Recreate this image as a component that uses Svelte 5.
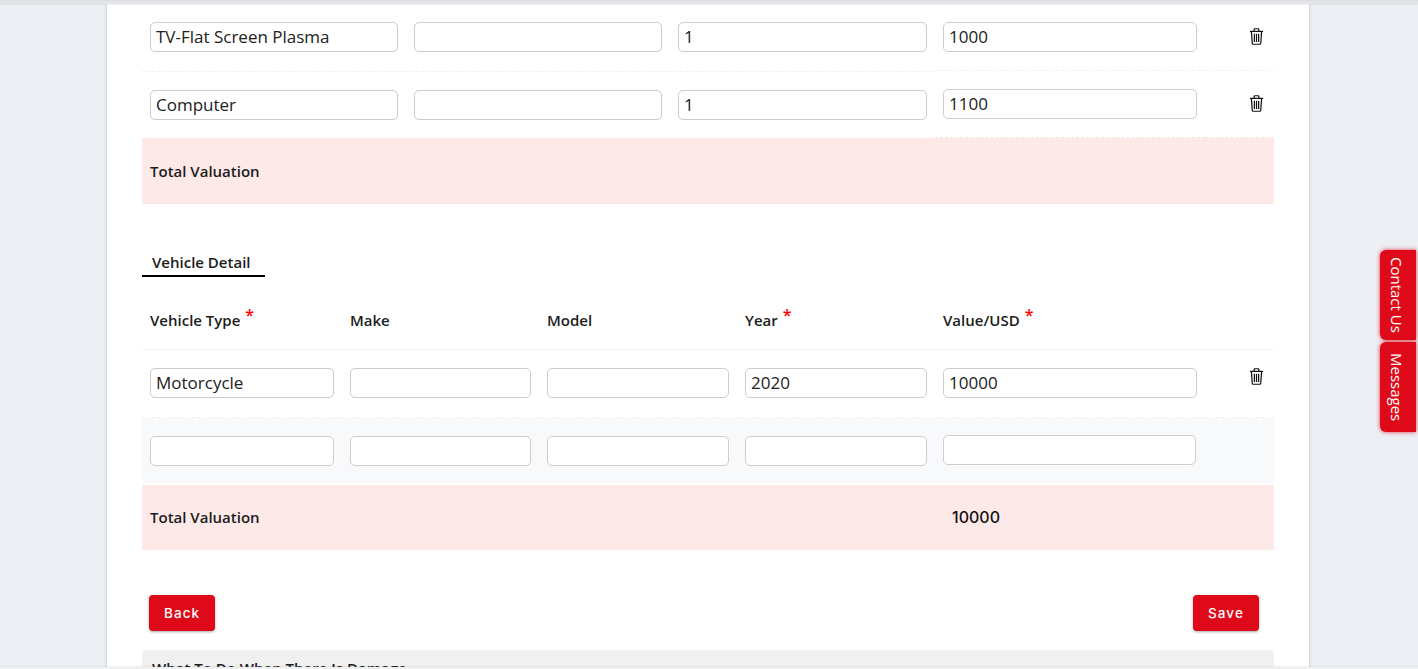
<script>
  const contents = [
    { item: "TV-Flat Screen Plasma", desc: "", qty: "1", value: "1000" },
    { item: "Computer", desc: "", qty: "1", value: "1100" }
  ];

  const vehicleHead = [
    { label: "Vehicle Type", required: true },
    { label: "Make" },
    { label: "Model" },
    { label: "Year", required: true },
    { label: "Value/USD", required: true }
  ];
</script>

{#snippet trash()}
  <svg class="trash" viewBox="0 0 14 16" width="15" height="17" fill="none" stroke="#111" stroke-width="1.15">
    <path d="M.8 3.2h12.4" />
    <path d="M4.8 3V1.2c0-.3.2-.5.5-.5h3.4c.3 0 .5.2.5.5V3" />
    <path d="M2.2 3.4l.8 11c0 .5.4.9.9.9h6.2c.5 0 .9-.4.9-.9l.8-11" />
    <path d="M5 5.5v7.6M7 5.5v7.6M9 5.5v7.6" />
  </svg>
{/snippet}

<div class="page">
  <div class="topbar"></div>

  <main class="card">
    <section class="contents">
      {#each contents as row, i}
        <div class="row items" class:second={i === 1}>
          <div class="cell"><input value={row.item} /></div>
          <div class="cell"><input value={row.desc} /></div>
          <div class="cell"><input value={row.qty} /></div>
          <div class="cell val"><input value={row.value} /></div>
          <div class="cell val act">{@render trash()}</div>
        </div>
      {/each}
      <div class="total"><span>Total Valuation</span></div>
    </section>

    <section class="vehicles">
      <div class="tab">Vehicle Detail</div>

      <div class="row cars head">
        {#each vehicleHead as col}
          <div class="th">{col.label}{#if col.required}<span class="star">*</span>{/if}</div>
        {/each}
        <div class="th"></div>
      </div>

      <div class="row cars filled">
        <div class="cell"><input value="Motorcycle" /></div>
        <div class="cell"><input /></div>
        <div class="cell"><input /></div>
        <div class="cell"><input value="2020" /></div>
        <div class="cell"><input value="10000" /></div>
        <div class="cell act up">{@render trash()}</div>
      </div>

      <div class="row cars blank">
        <div class="cell"><input /></div>
        <div class="cell"><input /></div>
        <div class="cell"><input /></div>
        <div class="cell"><input /></div>
        <div class="cell shift"><input /></div>
        <div class="cell"></div>
      </div>

      <div class="row cars total">
        <span class="label">Total Valuation</span>
        <span class="sum">10000</span>
      </div>
    </section>

    <div class="actions">
      <button>Back</button>
      <button>Save</button>
    </div>

    <div class="damage">What To Do When There Is Damage</div>
  </main>

  <div class="side">
    <button>Contact Us</button>
    <button>Messages</button>
  </div>

  <div class="bottomline"></div>
</div>

<style>
  :global(body) {
    margin: 0;
    background: #ecEFF4;
    font-family: "Open Sans", sans-serif;
    color: #212121;
  }

  .page {
    position: relative;
    height: 669px;
    overflow: hidden;
  }

  .topbar {
    position: relative;
    z-index: 2;
    height: 4px;
    background: linear-gradient(#dcdfe3, #e6e8eb);
    box-shadow: 0 1px 1px rgba(0, 0, 0, 0.06);
  }

  .card {
    width: 1132px;
    margin-left: 107px;
    padding: 0 35px;
    background: #fff;
    box-shadow: 0 0 3px rgba(90, 100, 120, 0.35);
    height: 700px;
  }

  .row {
    display: grid;
    grid-template-columns: 264px 264px 265px 270px 69px;
  }

  .row.cars {
    grid-template-columns: 200px 197px 198px 198px 270px 69px;
  }

  .cell {
    padding: 18px 8px;
  }

  input {
    display: block;
    box-sizing: border-box;
    width: 100%;
    height: 30px;
    padding: 0 5px 2px;
    border: 1px solid #d0cbcc;
    border-radius: 5px;
    background: #fff;
    font: 17px "Open Sans", sans-serif;
    color: #212121;
    outline: none;
  }

  .items .cell {
    border-bottom: 1px dashed #f1f1f1;
  }

  .items:not(.second) .cell {
    padding-bottom: 19px;
  }

  .items:not(.second) .cell.val {
    padding-bottom: 18px;
    margin-bottom: 1px;
  }

  .items.second .cell {
    border-bottom: none;
  }

  .items.second .cell.val {
    margin-top: -1px;
    padding-bottom: 18px;
    border-bottom: 1px dashed #f6e6e6;
  }

  .act {
    display: flex;
    justify-content: center;
    padding-left: 35px;
    padding-right: 0;
    box-sizing: border-box;
    align-items: flex-start;
  }

  .trash {
    margin-top: 6px;
    margin-left: -1px;
  }

  .act.up .trash {
    margin-top: 0;
  }

  .total {
    display: flex;
    align-items: center;
    height: 66px;
    background: #fee9e9;
    font-size: 15px;
    font-weight: 600;
    color: #1c1c1c;
  }

  .contents .total span {
    padding-left: 8px;
  }

  .vehicles {
    margin-top: 46px;
  }

  .tab {
    box-sizing: border-box;
    width: 123px;
    height: 27px;
    padding-left: 10px;
    border-bottom: 2px solid #000;
    font-size: 15px;
    font-weight: 600;
    line-height: 25px;
    color: #1c1c1c;
  }

  .head {
    border-bottom: 1px solid #f1f1f1;
  }

  .th {
    height: 20px;
    padding: 33px 8px 19px;
    font-size: 15px;
    font-weight: 600;
    line-height: 20px;
    color: #1c1c1c;
  }

  .star {
    margin-left: 5px;
    font-size: 16px;
    line-height: 0;
    vertical-align: 5px;
    color: #f00;
  }

  .filled {
    border-bottom: 1px dashed #f1f1f1;
  }

  .filled .cell {
    padding-bottom: 19px;
  }

  .blank {
    background: #f8f9fb;
  }

  .blank .cell {
    height: 30px;
  }

  .blank .shift {
    margin-top: -1px;
    padding-right: 9px;
  }

  .row.total {
    display: grid;
    height: 63px;
    margin-top: 1px;
    padding-bottom: 2px;
  }

  .label {
    grid-column: 1 / 5;
    padding-left: 8px;
  }

  .sum {
    padding-left: 17px;
    font: 500 16px Inter, sans-serif;
    color: #111;
  }

  .actions {
    display: flex;
    justify-content: space-between;
    margin-top: 45px;
    padding: 0 15px 0 7px;
  }

  .actions button {
    height: 36px;
    padding: 0 15px 1px;
    border: none;
    border-radius: 4px;
    background: #de0a19;
    box-shadow: 0 1px 3px rgba(0, 0, 0, 0.35);
    font: 500 13.5px Inter, sans-serif;
    letter-spacing: 1.1px;
    color: #fff;
  }

  .damage {
    margin-top: 19px;
    height: 60px;
    padding: 8px 10px;
    box-sizing: border-box;
    border-radius: 4px;
    background: #f0f0f0;
    font-size: 15px;
    font-weight: 600;
    color: #1c1c1c;
  }

  .side {
    position: absolute;
    top: 250px;
    left: 1380px;
    display: flex;
    flex-direction: column;
    gap: 2px;
  }

  .side button {
    width: 36px;
    height: 90px;
    padding: 0 2px 0 0;
    border: none;
    border-radius: 6px 0 0 6px;
    background: #de0a19;
    box-shadow: 0 0 4px rgba(222, 10, 25, 0.8);
    writing-mode: vertical-rl;
    font: 15px "Open Sans", sans-serif;
    color: #fff;
    text-align: center;
  }

  .bottomline {
    position: absolute;
    left: 0;
    right: 0;
    bottom: 0;
    height: 2px;
    background: #eef0f2;
    box-shadow: 0 -1px 1px rgba(0, 0, 0, 0.06);
  }
</style>
